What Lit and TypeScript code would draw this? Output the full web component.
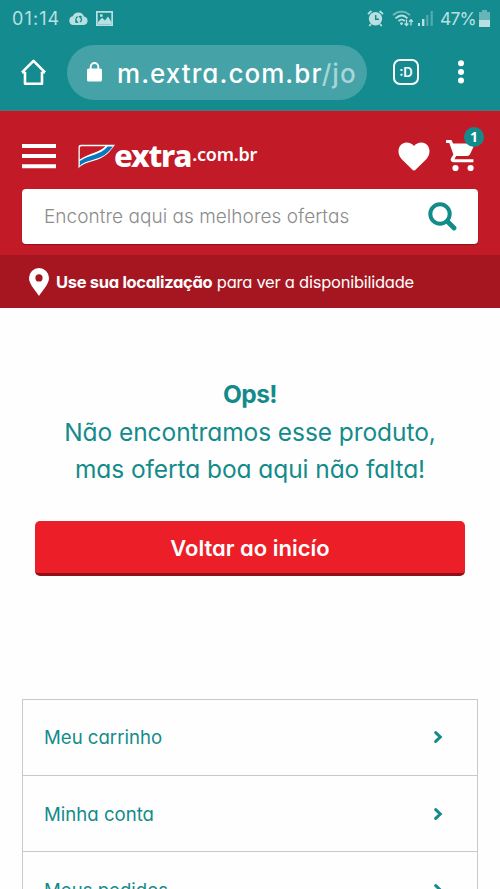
import { LitElement, html, css } from "lit";
import { customElement, property } from "lit/decorators.js";

const base = css`
  * { box-sizing: border-box; }
  svg { display: block; flex: none; }
`;

@customElement("phone-bar")
class PhoneBar extends LitElement {
  static styles = [base, css`
    :host { display: block; height: 111px; background: #148b8f; color: #fff; border-bottom: 1px solid #56727a; font-family: Inter, "Noto Sans", sans-serif; font-feature-settings: "cv11"; }
    .status { display: flex; align-items: center; height: 36px; padding: 0 10px 0 12px; color: #b9e0e1; }
    .time { width: 48px; margin-right: 9px; font-size: 18px; letter-spacing: 1.1px; white-space: nowrap; }
    .cloud { margin-right: 8px; }
    .alarm { margin-left: auto; margin-right: 8px; }
    .wifi { margin-right: 4px; }
    .signal { margin-right: 7px; }
    .percent { width: 36px; margin-right: 3px; font-size: 17.5px; letter-spacing: -0.9px; white-space: nowrap; }
    .tools { display: flex; align-items: center; height: 74px; padding: 0 33px 2px 20px; }
    .home { margin-right: 20px; }
    .address { display: flex; align-items: center; width: 300px; height: 55px; border-radius: 28px; background: #45a2a7; padding-left: 20px; margin-right: 26px; }
    .url { margin-left: 15px; padding-top: 3px; font-size: 26px; font-weight: 450; letter-spacing: 1.05px; white-space: nowrap; }
    .path { color: #a7d5d8; }
    .tabs { display: flex; align-items: center; justify-content: center; width: 26px; height: 26px; border: 2.6px solid #fff; border-radius: 7px; font-size: 13px; font-weight: 600; margin-right: 39px; }
  `];
  render() {
    return html`
      <div class="status">
        <span class="time">01:14</span>
        <svg class="cloud" width="19" height="15" viewBox="0 0 19 15">
          <path fill="currentColor" d="M4.5 14A4.4 4.4 0 0 1 3.8 5.3 6 6 0 0 1 15 5.5 4.3 4.3 0 0 1 14.8 14z"/>
          <path d="M8.7 5.7A3 3 0 0 0 8.2 11M10.8 5.7A3 3 0 0 1 11 11M7 9l1.3 2.2L6.2 11M12 7.4l-1.4-1.9 2.1-.1" fill="none" stroke="#148b8f" stroke-width="1.3"/>
        </svg>
        <svg width="17" height="15" viewBox="0 0 17 15">
          <path fill="currentColor" fill-rule="evenodd" d="M0 0h17v15H0zM1.7 1.7v11.6h13.6v-11.6z"/>
          <path fill="currentColor" d="M2 13V11l4-4.2 3 2.6L12 5.5l3.5 5.5v2zM4 3.3h2.6v2.4H4z"/>
        </svg>
        <svg class="alarm" width="17" height="17" viewBox="0 0 17 17">
          <circle cx="8.5" cy="8.7" r="6.7" fill="currentColor"/>
          <path d="M1 4.2 4.4 1M16 4.2 12.6 1M4 14l-1.7 2M13 14l1.7 2" stroke="currentColor" stroke-width="1.8"/>
          <path d="M8.7 5v4.2H12" fill="none" stroke="#148b8f" stroke-width="1.5"/>
        </svg>
        <svg class="wifi" width="22" height="17" viewBox="0 0 22 17" fill="none" stroke="currentColor" stroke-width="1.7">
          <path d="M1 5.2C6 .4 13 .4 18 5.2" opacity=".6"/>
          <path d="M3.5 8.4c4-3.6 8.5-3.6 12 0M6.4 11c2-1.7 4.5-1.7 6.4 0"/>
          <circle cx="9.5" cy="13.6" r="1.4" fill="currentColor" stroke="none"/>
          <path stroke-width="1.3" d="M14.5 9.5v6M12.6 13.5l1.9 2 1.9-2M19 15.5V9.7M17.1 11.7l1.9-2 1.9 2"/>
        </svg>
        <svg class="signal" width="15" height="17" viewBox="0 0 15 17" fill="currentColor">
          <path d="M0 13h2v3H0zM4 9h2.4v7H4z"/>
          <path opacity=".38" d="M8.2 5h2.2v11H8.2zM12.6 1h2.2v15h-2.2z"/>
        </svg>
        <span class="percent">47%</span>
        <svg width="11" height="17" viewBox="0 0 11 17" fill="currentColor">
          <path opacity=".5" d="M3 0h5v2h3v8H0V2h3z"/><path d="M0 10h11v7H0z"/>
        </svg>
      </div>
      <div class="tools">
        <svg class="home" width="27" height="27" viewBox="0 0 27 27" fill="none" stroke="#fff" stroke-width="2.6" stroke-linejoin="round">
          <path d="M5 12.7v12h17v-12M2 13.3 13.5 1.8 25 13.3M2 13.3h3M22 13.3h3"/>
        </svg>
        <div class="address">
          <svg width="15" height="20" viewBox="0 0 15 20">
            <rect y="6.5" width="15" height="13" rx="1.6" fill="#fff"/>
            <path d="M3.7 8V4.8a3.8 3.8 0 0 1 7.6 0V8" fill="none" stroke="#fff" stroke-width="1.9"/>
          </svg>
          <span class="url">m.extra.com.br<span class="path">/jo</span></span>
        </div>
        <div class="tabs">:D</div>
        <svg width="6" height="24" viewBox="0 0 6 24" fill="#fff">
          <circle cx="3" cy="3.3" r="3"/><circle cx="3" cy="12" r="3"/><circle cx="3" cy="20.5" r="3"/>
        </svg>
      </div>`;
  }
}

@customElement("store-header")
class StoreHeader extends LitElement {
  static styles = [base, css`
    :host { display: block; color: #fff; }
    .top { height: 144px; background: #c21a27; padding: 0 22px; }
    .row { display: flex; align-items: center; height: 78px; padding-top: 12px; }
    .menu { margin-right: 22px; }
    .name { margin-left: -2px; display: flex; align-items: baseline; font-family: "Noto Sans", sans-serif; font-weight: 800; font-size: 31px; line-height: 30px; letter-spacing: -1.2px; margin-top: -3px; }
    .domain { margin-left: 1px; padding-bottom: 3px; align-self: flex-end; line-height: 26px; font-size: 18px; font-weight: 600; letter-spacing: -0.2px; }
    .heart { margin-left: auto; margin-right: 16px; }
    .cart { position: relative; width: 31px; margin-right: 1px; }
    .badge { position: absolute; left: 18px; top: -13px; width: 20px; height: 20px; border-radius: 50%; background: #148b8b; font: 700 14px/20px "Noto Sans", sans-serif; text-align: center; }
    .search { display: flex; align-items: center; justify-content: space-between; height: 55px; border-radius: 4px; background: #fff; padding: 0 21px 0 22px; color: #8b8b8b; font-size: 19px; font-weight: 350; letter-spacing: 0.04px; box-shadow: 0 1px 1px #92101b; }
    .place { display: flex; align-items: center; height: 53px; background: #a61620; padding-left: 29px; font-size: 16.5px; white-space: nowrap; }
    .pin { margin-right: 7px; }
    .hint { letter-spacing: -0.25px; }
    b { font-weight: 700; letter-spacing: -0.31px; }
  `];
  render() {
    return html`
      <div class="top">
        <div class="row">
          <svg class="menu" width="34" height="25" viewBox="0 0 34 25" fill="#fff"><path d="M0 0h34v4H0zM0 10h34v4H0zM0 20.2h34v4H0z"/></svg>
          <svg width="38" height="25" viewBox="0 0 38 25">
            <path d="M.5 24.5V3Q.5 .7 2.8 .7H37C31 9 27 13.5 15 17 8 19 3.5 20.5 .5 24.5z" fill="#fff"/>
            <path d="M1.8 15.4V4Q1.8 2.2 3.5 2.2H27.5C21.5 8.6 12 8.5 1.8 15.4z" fill="#c21a27"/>
            <path d="M1.8 17.1C11 10.5 22 11.5 29.6 2.5H35C27 13 21 14 12 16.7 7 18.2 4 19.3 1.8 21.9z" fill="#0878bd"/>
          </svg>
          <span class="name">extra<span class="domain">.com.br</span></span>
          <svg class="heart" width="32" height="29" viewBox="0 0 32 29"><path fill="#fff" d="M16 28.6c-.8 0-1.2-.4-1.8-1L4 17.4C1.6 14.9.5 12.4.5 9.2.5 4 4 .4 8.5.4c3 0 5.9 1.2 7.5 3.6C17.6 1.6 20.5.4 23.5.4 28 .4 31.5 4 31.5 9.2c0 3.2-1.1 5.7-3.5 8.2L17.8 27.6c-.6.6-1 1-1.8 1z"/></svg>
          <div class="cart">
            <svg width="31" height="32" viewBox="0 0 31 32" fill="#fff">
              <path d="M0 0h5.5l1.6 3.4h22L24 14.2q-.8 1.7-2.7 1.7H10.2l-1.8 3.3h19v3H7.6c-2.8 0-3.5-2.3-2.4-4.1l2.2-3.7L3.3 3H0z"/>
              <circle cx="9.5" cy="28" r="3.1"/><circle cx="24.6" cy="28" r="3.1"/>
            </svg>
            <span class="badge">1</span>
          </div>
        </div>
        <div class="search">
          <span>Encontre aqui as melhores ofertas</span>
          <svg width="29" height="29" viewBox="0 0 29 29" fill="none" stroke="#148b8b"><circle cx="12" cy="12" r="9.7" stroke-width="4"/><path d="m20 20 6 6" stroke-width="4.8" stroke-linecap="round"/></svg>
        </div>
      </div>
      <div class="place">
        <svg class="pin" width="20" height="28" viewBox="0 0 20 28"><path fill="#fff" fill-rule="evenodd" d="M10 28C7 23 0 16.5 0 10a10 10 0 0 1 20 0c0 6.5-7 13-10 18zM10 6.3a3.6 3.6 0 1 0 0 7.2 3.6 3.6 0 0 0 0-7.2z"/></svg>
        <b>Use sua localização</b><span class="hint">&nbsp;para ver a disponibilidade</span>
      </div>`;
  }
}

@customElement("link-row")
class LinkRow extends LitElement {
  @property() label = "";
  static styles = [base, css`
    :host { display: flex; align-items: center; justify-content: space-between; height: 76.4px; padding: 0 34px 0 21px; border-bottom: 1.5px solid #c9c9c9; color: #148b8b; font-size: 18.6px; }
  `];
  render() {
    return html`<span>${this.label}</span>
      <svg width="9" height="12" viewBox="0 0 9 12"><path d="m1.7 1.6 4.6 4.4-4.6 4.4" fill="none" stroke="#148b8b" stroke-width="3" stroke-linecap="round"/></svg>`;
  }
}

@customElement("app-root")
class AppRoot extends LitElement {
  static styles = [base, css`
    :host { display: block; height: 889px; overflow: hidden; background: #fefefe; font-family: Inter, Lato, sans-serif; font-feature-settings: "cv11"; }
    .message { padding-top: 68px; text-align: center; color: #148b8b; font-size: 24.5px; font-weight: 370; line-height: 37.5px; letter-spacing: -0.07px; }
    .message p, .message h1 { margin: 0; font-size: inherit; }
    .message h1 { letter-spacing: -0.6px; }
    .button { display: flex; align-items: center; justify-content: center; width: 430px; height: 55px; margin: 32px auto 0 35px; padding: 2px 0 0; border: 0; border-bottom: 3px solid #8d101b; border-radius: 5px; background: #ec1e28; color: #fff; font: 600 22px Inter, sans-serif; font-feature-settings: "cv11"; }
    .links { margin: 123px 22px 0; border: 1.5px solid #c9c9c9; }
  `];
  render() {
    return html`
      <phone-bar></phone-bar>
      <store-header></store-header>
      <div class="message">
        <h1>Ops!</h1>
        <p>Não encontramos esse produto,<br>mas oferta boa aqui não falta!</p>
      </div>
      <button class="button">Voltar ao inicío</button>
      <div class="links">
        ${["Meu carrinho", "Minha conta", "Meus pedidos"].map((l) => html`<link-row label=${l}></link-row>`)}
      </div>`;
  }
}
